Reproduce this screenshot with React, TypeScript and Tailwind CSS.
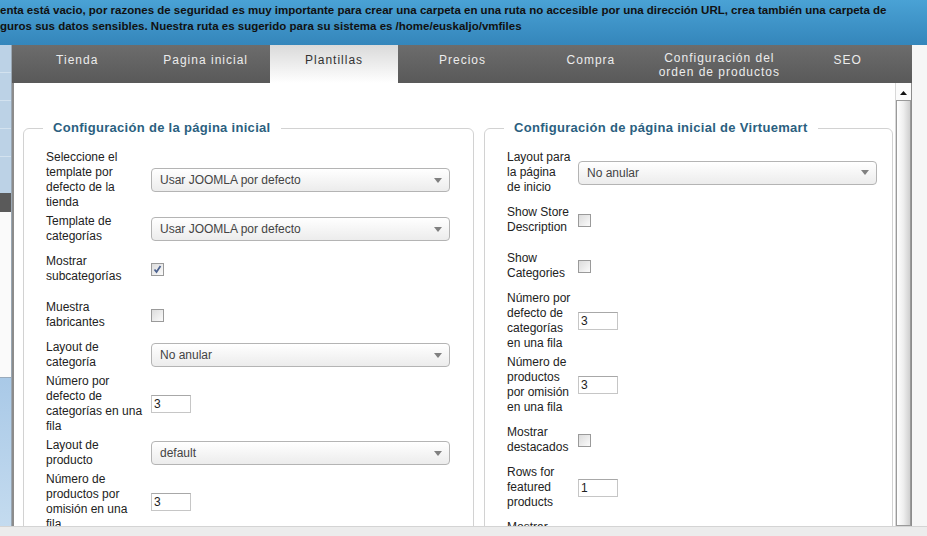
type Row = {
  label: string[]
  kind: "select" | "check" | "input"
  value?: string
  checked?: boolean
}

const tabs = [
  { name: ["Tienda"] },
  { name: ["Pagina inicial"] },
  { name: ["Plantillas"], active: true },
  { name: ["Precios"] },
  { name: ["Compra"] },
  { name: ["Configuración del", "orden de productos"] },
  { name: ["SEO"] },
]

const leftRows: Row[] = [
  { label: ["Seleccione el", "template por", "defecto de la", "tienda"], kind: "select", value: "Usar JOOMLA por defecto" },
  { label: ["Template de", "categorías"], kind: "select", value: "Usar JOOMLA por defecto" },
  { label: ["Mostrar", "subcategorías"], kind: "check", checked: true },
  { label: ["Muestra", "fabricantes"], kind: "check" },
  { label: ["Layout de", "categoría"], kind: "select", value: "No anular" },
  { label: ["Número por", "defecto de", "categorías en una", "fila"], kind: "input", value: "3" },
  { label: ["Layout de", "producto"], kind: "select", value: "default" },
  { label: ["Número de", "productos por", "omisión en una", "fila"], kind: "input", value: "3" },
]

const rightRows: Row[] = [
  { label: ["Layout para", "la página", "de inicio"], kind: "select", value: "No anular" },
  { label: ["Show Store", "Description"], kind: "check" },
  { label: ["Show", "Categories"], kind: "check" },
  { label: ["Número por", "defecto de", "categorías", "en una fila"], kind: "input", value: "3" },
  { label: ["Número de", "productos", "por omisión", "en una fila"], kind: "input", value: "3" },
  { label: ["Mostrar", "destacados"], kind: "check" },
  { label: ["Rows for", "featured", "products"], kind: "input", value: "1" },
  { label: ["Mostrar", "recientes"], kind: "check" },
]

const Select = ({ value }: { value?: string }) => (
  <div className="flex h-[24px] w-[299px] items-center justify-between rounded-[4px] border border-[#b4b4b4] bg-gradient-to-b from-[#ffffff] to-[#ececec] pl-[8px] pr-[7px] text-[12px] text-[#444]">
    <span>{value}</span>
    <svg width="8" height="5" viewBox="0 0 8 5">
      <path d="M0 0 L8 0 L4 5 Z" fill="#808080" />
    </svg>
  </div>
)

const Check = ({ checked }: { checked?: boolean }) => (
  <div className="flex h-[13px] w-[13px] items-center justify-center border border-[#9a9a9a] bg-gradient-to-br from-[#dcdcdc] to-[#fbfbfb]">
    {checked && (
      <svg width="9" height="9" viewBox="0 0 9 9">
        <path d="M1.5 4.5 L3.5 7 L7.5 1" stroke="#4d6390" strokeWidth="1.8" fill="none" />
      </svg>
    )}
  </div>
)

const TextInput = ({ value }: { value?: string }) => (
  <div className="flex h-[18px] w-[40px] items-center border border-[#c6c6c6] border-t-[#a8a8a8] bg-white pl-[2px] text-[12px] text-[#222]">
    {value}
  </div>
)

const Fieldset = ({ title, rows, labelW, className }: { title: string; rows: Row[]; labelW: string; className: string }) => (
  <fieldset className={`rounded-[6px] border border-[#d2d2d2] pl-[18px] pt-[12px] ${className}`}>
    <legend className="ml-[1px] px-[10px] text-[13px] leading-[16px] font-bold tracking-[0.3px] text-[#2b5f80]">
      {title}
    </legend>
    <div className="ml-[4px] flex flex-col">
      {rows.map((row, i) => (
        <div key={i} className={`flex items-center ${row.kind === "check" ? "py-[8px]" : "py-[2px]"}`}>
          <div className={`${labelW} shrink-0 text-[12px] leading-[15px] text-[#222]`}>
            {row.label.map((l, j) => (
              <div key={j}>{l}</div>
            ))}
          </div>
          {row.kind === "select" && <Select value={row.value} />}
          {row.kind === "check" && <Check checked={row.checked} />}
          {row.kind === "input" && <TextInput value={row.value} />}
        </div>
      ))}
    </div>
  </fieldset>
)

const App = () => {
  return (
    <div className="flex h-[536px] w-[927px] flex-col overflow-hidden bg-white font-['Liberation_Sans',Arial,sans-serif]">
      <header className="h-[45px] shrink-0 bg-gradient-to-b from-[#4aa2d5] to-[#3486bb] pt-[2px] text-[11.5px] leading-[16px] font-bold whitespace-nowrap text-[#111]">
        <div>enta está vacio, por razones de seguridad es muy importante para crear una carpeta en una ruta no accesible por una dirección URL, crea también una carpeta de</div>
        <div>guros sus datos sensibles. Nuestra ruta es sugerido para su sistema es /home/euskaljo/vmfiles</div>
      </header>

      <div className="flex h-[481px] shrink-0">
        {/* side strip of the admin menu behind */}
        <div className="flex w-[12px] shrink-0 flex-col border-r border-[#9aa7b3]">
          <div className="h-[148px] bg-[#bcd2e6]">
            <div className="h-[28px] border-b border-[#d3e2ef]" />
            <div className="h-[28px] border-b border-[#d3e2ef]" />
            <div className="h-[28px] border-b border-[#d3e2ef]" />
            <div className="h-[28px] border-b border-[#d3e2ef]" />
          </div>
          <div className="h-[19px] bg-[#5a5a5a]" />
          <div className="h-[166px] border-b border-[#9ab] bg-[#fafafa]" />
          <div className="flex-1 bg-gradient-to-b from-[#a9c9e7] to-[#c4dbef]" />
        </div>

        <div className="flex w-[900px] shrink-0 flex-col">
          <nav className="grid h-[38px] shrink-0 grid-cols-7 bg-gradient-to-b from-[#6c6c6c] to-[#595959] pl-[1px]">
            {tabs.map((t, i) => (
              <div
                key={i}
                className={`${t.name.length > 1 ? "pt-[6px]" : "pt-[8px]"} text-center text-[12px] leading-[14px] tracking-[1px] ${
                  t.active ? "bg-gradient-to-b from-[#dadada] to-[#ffffff] text-[#333]" : "text-[#ececec]"
                }`}
              >
                {t.name.map((n, j) => (
                  <div key={j}>{n}</div>
                ))}
              </div>
            ))}
          </nav>

          <div className="flex min-h-0 flex-1 border-l-2 border-r border-[#8c8c8c]">
            <div className="flex min-w-0 flex-1 items-start gap-[10px] overflow-hidden pl-[9px] pt-[37px]">
              <Fieldset title="Configuración de la página inicial" rows={leftRows} labelW="w-[105px]" className="w-[451px] shrink-0" />
              <Fieldset title="Configuración de página inicial de Virtuemart" rows={rightRows} labelW="w-[71px]" className="w-[409px] shrink-0" />
            </div>

            {/* scrollbar */}
            <div className="flex w-[16px] shrink-0 flex-col border-l border-[#d8d8d8] bg-[#fbfbfb]">
              <div className="flex h-[17px] items-center justify-center pt-[2px]">
                <svg width="7" height="4" viewBox="0 0 7 4">
                  <path d="M0 4 L7 4 L3.5 0 Z" fill="#111" />
                </svg>
              </div>
              <div className="flex-1 border border-[#9a9a9a] bg-gradient-to-r from-[#ffffff] via-[#eeeeee] to-[#cfcfcf]" />
            </div>
          </div>
        </div>

        <div className="flex-1 bg-[#f6f6f6]" />
      </div>

      <div className="flex-1 border-t border-[#d4d4d4] bg-[#ececec]" />
    </div>
  )
}

export default App
